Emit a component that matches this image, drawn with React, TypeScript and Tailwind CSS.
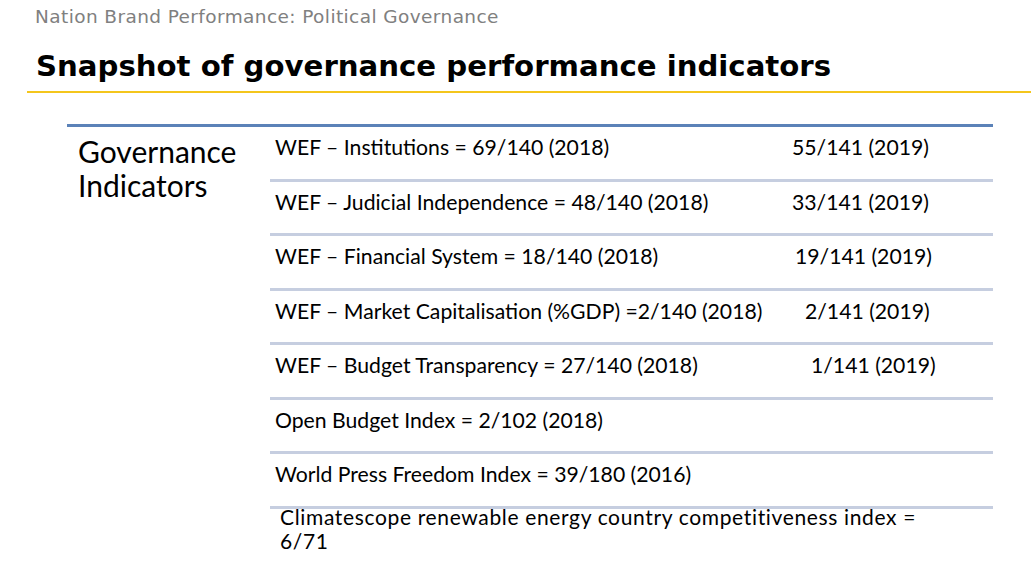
const rows: { left: string; right?: string; shift?: string }[] = [
  { left: 'WEF – Institutions = 69/140 (2018)', right: '55/141 (2019)', shift: 'ml-0' },
  { left: 'WEF – Judicial Independence = 48/140 (2018)', right: '33/141 (2019)', shift: 'ml-0' },
  { left: 'WEF – Financial System = 18/140 (2018)', right: '19/141 (2019)', shift: 'ml-[3px]' },
  { left: 'WEF – Market Capitalisation (%GDP) =2/140 (2018)', right: '2/141 (2019)', shift: 'ml-[13px]' },
  { left: 'WEF – Budget Transparency = 27/140 (2018)', right: '1/141 (2019)', shift: 'ml-[19px]' },
  { left: 'Open Budget Index = 2/102 (2018)' },
  { left: 'World Press Freedom Index = 39/180 (2016)' },
]

export default function App() {
  return (
    <div className="w-[1031px] h-[561px] bg-white overflow-hidden font-['Lato','Open_Sans',sans-serif] text-black">
      {/* slide header */}
      <div className="pl-[35px] pt-[5px] text-[18.5px] leading-[24px] tracking-[0.4px] text-[#808080] font-['DejaVu_Sans',sans-serif]">
        Nation Brand Performance: Political Governance
      </div>
      <div className="pl-[36px] pt-[19px] text-[29.2px] leading-[36px] font-bold font-['DejaVu_Sans',sans-serif]">
        Snapshot of governance performance indicators
      </div>
      <div className="ml-[27px] mt-[7px] h-[2px] bg-[#f4c61c]" />

      {/* table */}
      <div className="ml-[67px] mt-[31px] w-[926px] border-t-[3px] border-[#5b82b8] flex">
        <div className="w-[203px] pl-[11px] pt-[7px] text-[30px] leading-[34px]">
          Governance
          <br />
          Indicators
        </div>
        <div className="flex-1 flex flex-col">
          {rows.map((r) => (
            <div key={r.left} className="h-[54.5px] border-b-[3px] border-[#c6cee0] flex items-start pt-[8px] leading-[24px] pl-[5px] text-[21.2px]">
              <span className="w-[517px] shrink-0">{r.left}</span>
              {r.right && <span className={r.shift}>{r.right}</span>}
            </div>
          ))}
          <div className="pl-[10px] -mt-[4px] text-[21px] leading-[24px] tracking-[0.65px] w-[660px]">
            Climatescope renewable energy country competitiveness index = 6/71
          </div>
        </div>
      </div>
    </div>
  )
}
